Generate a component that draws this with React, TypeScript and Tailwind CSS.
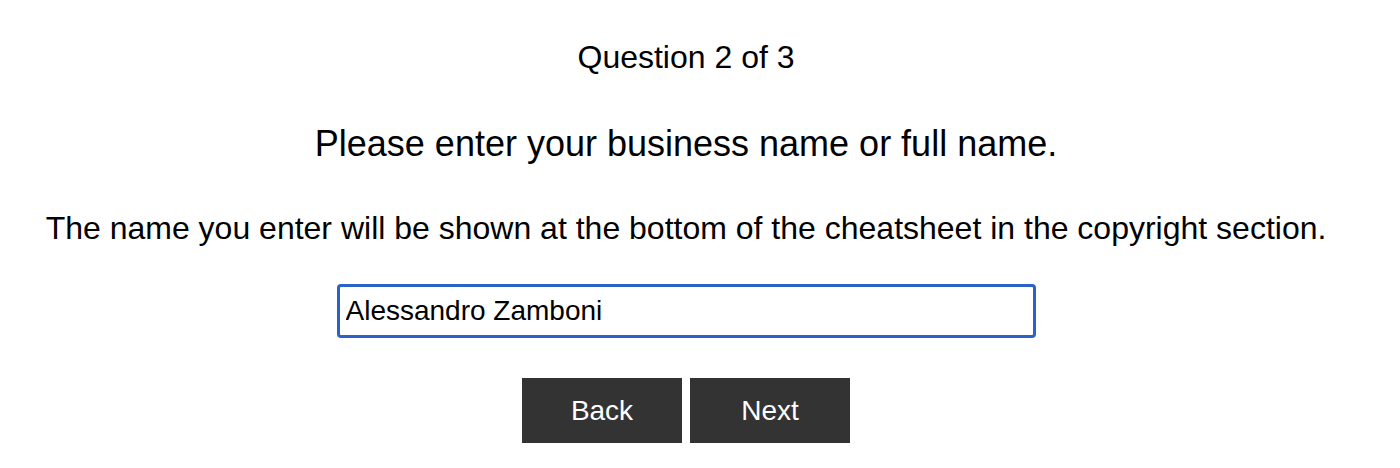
import { useState } from "react"

const App = () => {
  const [name, setName] = useState("Alessandro Zamboni")

  return (
    <div className="w-[1372px] h-[468px] bg-white text-black font-['Liberation_Sans',Arial,sans-serif] flex flex-col items-center">
      <p className="mt-[39px] text-[32px] leading-[37px]">Question 2 of 3</p>
      <h2 className="mt-[47px] text-[36px] leading-[41px]">
        Please enter your business name or full name.
      </h2>
      <p className="mt-[46px] text-[32px] leading-[37px]">
        The name you enter will be shown at the bottom of the cheatsheet in the copyright section.
      </p>
      <input
        type="text"
        value={name}
        onChange={(e) => {
          setName(e.target.value)
        }}
        className="mt-[37px] w-[699px] h-[54px] border-[3px] border-[#2b62c9] rounded-[4px] px-[6px] text-[28px] outline-none"
      />
      <div className="mt-[40px] flex gap-2">
        <button className="w-[160px] h-[65px] bg-[#333333] text-white text-[28px]">
          Back
        </button>
        <button className="w-[160px] h-[65px] bg-[#333333] text-white text-[28px]">
          Next
        </button>
      </div>
    </div>
  )
}

export default App
